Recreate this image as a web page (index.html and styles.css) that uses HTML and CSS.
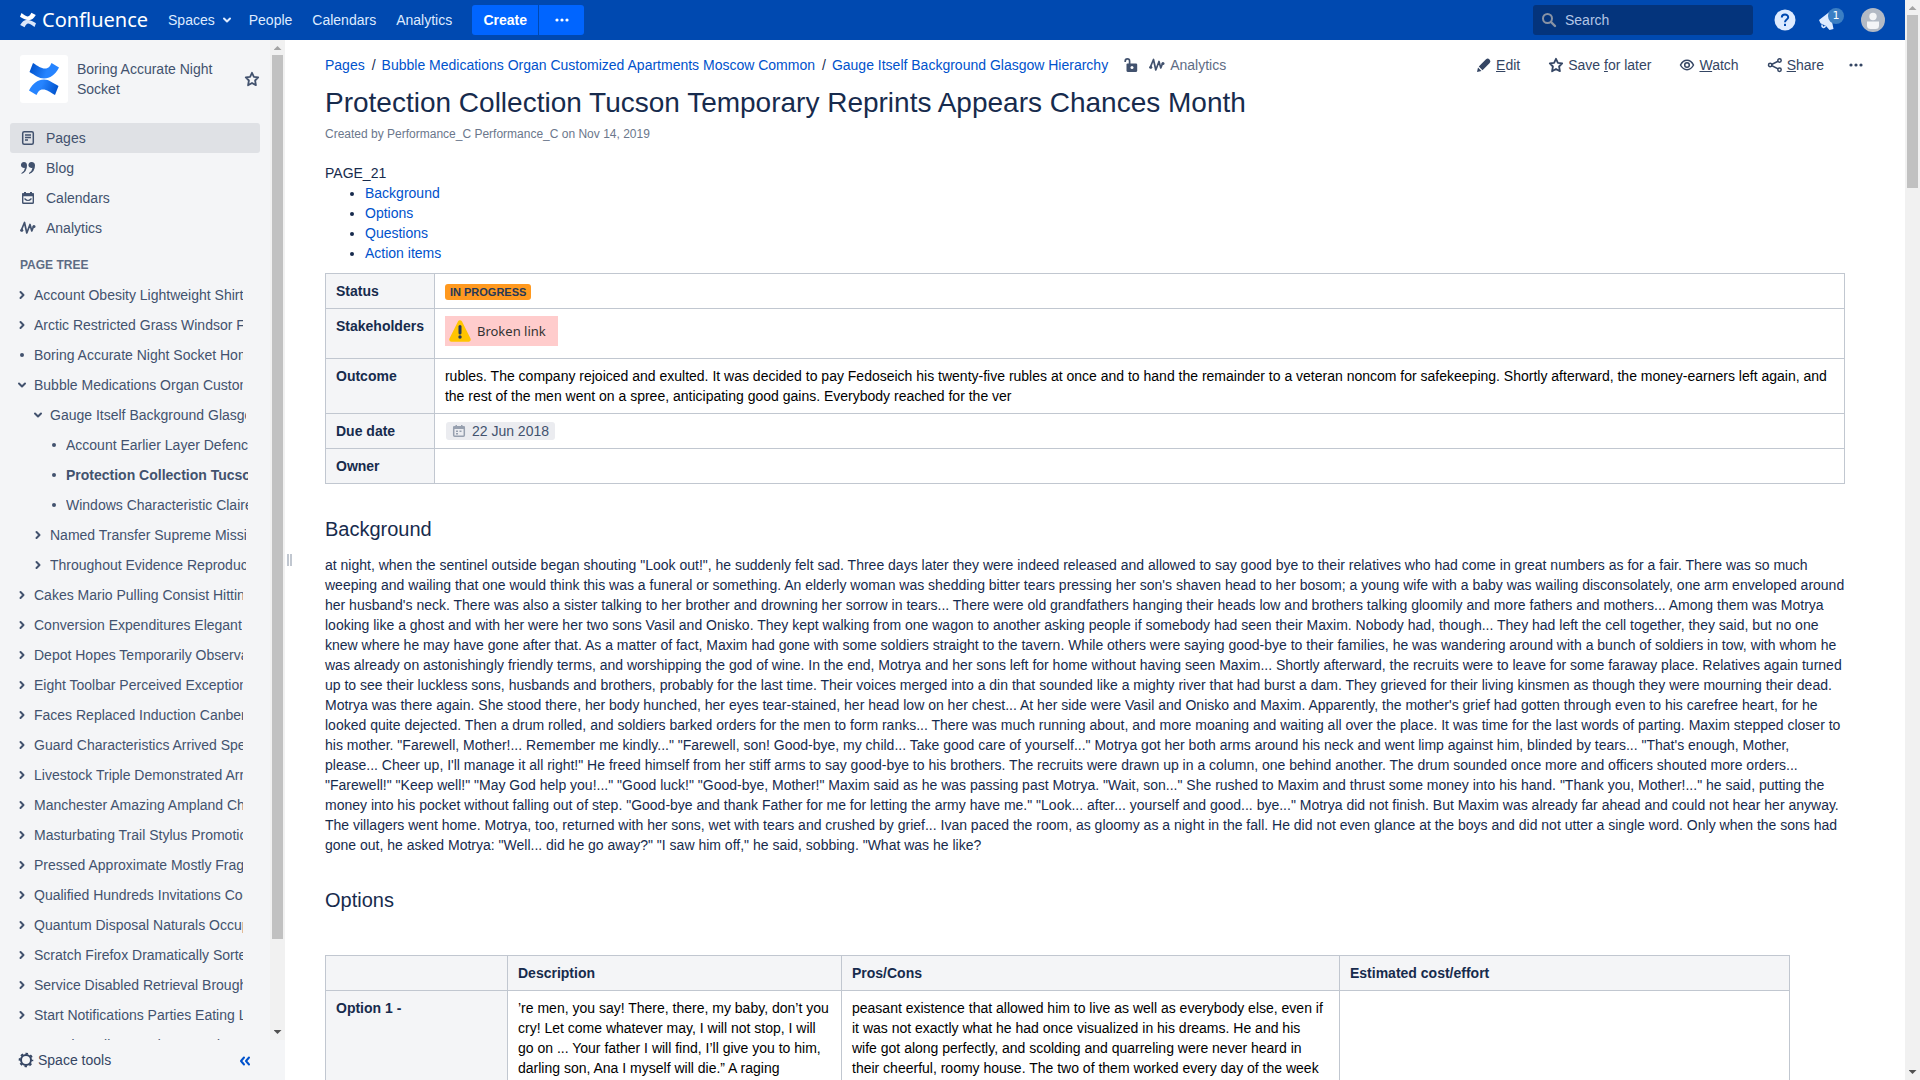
FILE: index.html
```html
<!DOCTYPE html>
<html lang="en">
<head>
<meta charset="utf-8">
<title>Protection Collection Tucson Temporary Reprints Appears Chances Month - Confluence</title>
<link rel="stylesheet" href="styles.css">
</head>
<body>
<svg class="defs" aria-hidden="true">
  <defs>
    <linearGradient id="blueTop" x1="0" y1="0.4" x2="1" y2="0.6"><stop offset="0" stop-color="#0052cc"/><stop offset="0.6" stop-color="#2684ff"/></linearGradient>
    <linearGradient id="blueBottom" x1="1" y1="0.6" x2="0" y2="0.4"><stop offset="0" stop-color="#0052cc"/><stop offset="0.6" stop-color="#2684ff"/></linearGradient>
    <symbol id="star" viewBox="0 0 16 16"><path d="M8 1.800l1.900 4 4.300.6-3.100 3.100.8 4.700L8 12l-3.900 2.200.8-4.700L1.800 6.400l4.300-.6z" fill="none" stroke="currentColor" stroke-width="1.800" stroke-linejoin="round"/></symbol>
    <symbol id="pulse" viewBox="0 0 16 16"><path d="M1.200 10.500L4.500 2.500L6.800 13L10 4.500L11.800 11L13.500 6.500" fill="none" stroke="currentColor" stroke-width="1.700" stroke-linecap="round" stroke-linejoin="round"/><circle cx="1.800" cy="10.300" r="1.500" fill="currentColor"/><circle cx="14" cy="6.500" r="1.500" fill="currentColor"/></symbol>
    <symbol id="right" viewBox="0 0 16 16"><path d="M6.500 5l3 3-3 3" fill="none" stroke="currentColor" stroke-width="2" stroke-linecap="round" stroke-linejoin="round"/></symbol>
    <symbol id="down" viewBox="0 0 16 16"><path d="M5 6.500l3 3 3-3" fill="none" stroke="currentColor" stroke-width="2" stroke-linecap="round" stroke-linejoin="round"/></symbol>
    <symbol id="dot" viewBox="0 0 16 16"><circle cx="8" cy="8" r="2" fill="currentColor"/></symbol>
    <symbol id="more" viewBox="0 0 16 16"><circle cx="3" cy="8" r="1.600" fill="currentColor"/><circle cx="8" cy="8" r="1.600" fill="currentColor"/><circle cx="13" cy="8" r="1.600" fill="currentColor"/></symbol>
  </defs>
</svg>
<div class="app">
  <header class="header">
    <a class="brand" href="#">
      <svg width="16" height="16" viewBox="0 0 16 16"><path d="M1.500 1C4 2.600 5.500 4.200 7.600 4.400C9.500 4.500 10.400 2.500 11.400.8L15.800 3C14 6 12 8.300 8.400 8.200C5.500 8 2.800 6.300 0 4.800z" fill="#fff"/><path d="M14.500 15C12 13.400 10.500 11.800 8.400 11.600C6.500 11.500 5.600 13.500 4.600 15.200L.2 13C2 10 4 7.700 7.600 7.800C10.500 8 13.200 9.700 16 11.200z" fill="#dbe7fa"/></svg>
      <span class="brand-name">Confluence</span>
    </a>
    <nav class="main-nav">
      <a class="spaces" href="#">Spaces <svg width="16" height="16"><use href="#down"/></svg></a>
      <a href="#">People</a>
      <a href="#">Calendars</a>
      <a href="#">Analytics</a>
    </nav>
    <div class="create-group">
      <button class="create">Create</button>
      <button class="create-more" aria-label="Create from template"><svg width="16" height="16"><use href="#more"/></svg></button>
    </div>
    <div class="search">
      <svg width="16" height="16" viewBox="0 0 16 16"><circle cx="6.500" cy="6.500" r="4.500" fill="none" stroke="currentColor" stroke-width="2"/><path d="M10 10l4 4" stroke="currentColor" stroke-width="2.400" stroke-linecap="round"/></svg>
      <input type="text" placeholder="Search" aria-label="Search">
    </div>
    <div class="user-tools">
      <button aria-label="Help"><svg width="24" height="24" viewBox="0 0 24 24"><circle cx="12" cy="12" r="10.500" fill="#deebff"/><path d="M8.800 9.600C8.800 5.400 15.200 5.600 15.200 9.300C15.200 11.600 12 11.500 12 14.200" fill="none" stroke="#0049b0" stroke-width="2"/><rect x="11" y="15.800" width="2" height="2.200" fill="#0049b0"/></svg></button>
      <button class="notify" aria-label="Notifications"><svg width="24" height="24" viewBox="0 0 24 24"><path d="M2 12L13 3.500L16.500 21L12.500 22L9 18L3.500 15.200z" fill="#deebff"/><path d="M5 16.500c-.5 3 2 4 3.500 1.500" fill="none" stroke="#deebff" stroke-width="1.500"/></svg><span class="badge">1</span></button>
      <button aria-label="Profile"><svg width="24" height="24" viewBox="0 0 24 24"><circle cx="12" cy="12" r="12" fill="#b3bac5"/><circle cx="12" cy="8.500" r="3.700" fill="#f4f5f7"/><path d="M6 13.500h12v4q0 3.500-3.500 3.500h-5Q6 21 6 17.500z" fill="#f4f5f7"/></svg></button>
    </div>
  </header>
  <div class="body">
    <aside class="sidebar">
      <div class="sidebar-scroll">
        <div class="sidebar-content">
          <div class="space">
            <span class="space-logo"><svg width="30" height="34" viewBox="0 0 30 34"><path d="M4 1C9 4 12 6.500 16 6.500C20 6.500 21 4 22.500 1L30 5.500C26 13 21 16.500 15 16.500C10 16.500 6 13 .5 10z" fill="url(#blueTop)"/><path d="M26 33C21 30 18 27.500 14 27.500C10 27.500 9 30 7.500 33L0 28.500C4 21 9 17.500 15 17.500C20 17.500 24 21 29.500 24z" fill="url(#blueBottom)"/></svg></span>
            <a class="space-name" href="#">Boring Accurate Night Socket</a>
            <button class="plain" aria-label="Save space"><svg width="16" height="16"><use href="#star"/></svg></button>
          </div>
          <nav class="links">
            <a class="current" href="#"><svg width="16" height="16" viewBox="0 0 16 16"><rect x="2.700" y="1.700" width="10.600" height="12.600" rx="1.500" fill="none" stroke="currentColor" stroke-width="1.500"/><path d="M5 5h6M5 7.500h6M5 10h3" stroke="currentColor" stroke-width="1.300"/></svg>Pages</a>
            <a href="#"><svg width="16" height="16" viewBox="0 0 16 16"><path d="M4 2a3 3 0 1 0 1 5.800Q4.700 11 1.500 13v1Q7 12 7 5.500Q7 2 4 2zM11.500 2a3 3 0 1 0 1 5.800Q12.200 11 9 13v1Q15 12 15 5.500Q15 2 11.500 2z" fill="currentColor"/></svg>Blog</a>
            <a href="#"><svg width="16" height="16" viewBox="0 0 16 16"><rect x="2.700" y="4" width="10.600" height="9.300" rx=".8" fill="none" stroke="currentColor" stroke-width="1.400"/><path d="M2 3.300h12V6.200H2zM4 2h2v2H4zM10 2h2v2h-2z" fill="currentColor"/><path d="M4.500 8.500q3.500 4 7 0" fill="none" stroke="currentColor" stroke-width="1.200"/></svg>Calendars</a>
            <a href="#"><svg width="16" height="16"><use href="#pulse"/></svg>Analytics</a>
          </nav>
          <h2 class="tree-title">PAGE TREE</h2>
          <ul class="tree">
            <li><svg><use href="#right"/></svg><a href="#">Account Obesity Lightweight Shirts</a></li>
            <li><svg><use href="#right"/></svg><a href="#">Arctic Restricted Grass Windsor Folders</a></li>
            <li><svg><use href="#dot"/></svg><a href="#">Boring Accurate Night Socket Home</a></li>
            <li><svg><use href="#down"/></svg><a href="#">Bubble Medications Organ Customized Apartments Moscow Common</a></li>
            <li class="level-2"><svg><use href="#down"/></svg><a href="#">Gauge Itself Background Glasgow Hierarchy</a></li>
            <li class="level-3"><svg><use href="#dot"/></svg><a href="#">Account Earlier Layer Defence</a></li>
            <li class="level-3 active"><svg><use href="#dot"/></svg><a href="#">Protection Collection Tucson Temporary</a></li>
            <li class="level-3"><svg><use href="#dot"/></svg><a href="#">Windows Characteristic Claire</a></li>
            <li class="level-2"><svg><use href="#right"/></svg><a href="#">Named Transfer Supreme Missing</a></li>
            <li class="level-2"><svg><use href="#right"/></svg><a href="#">Throughout Evidence Reproduced</a></li>
            <li><svg><use href="#right"/></svg><a href="#">Cakes Mario Pulling Consist Hitting</a></li>
            <li><svg><use href="#right"/></svg><a href="#">Conversion Expenditures Elegant</a></li>
            <li><svg><use href="#right"/></svg><a href="#">Depot Hopes Temporarily Observations</a></li>
            <li><svg><use href="#right"/></svg><a href="#">Eight Toolbar Perceived Exceptions</a></li>
            <li><svg><use href="#right"/></svg><a href="#">Faces Replaced Induction Canberra</a></li>
            <li><svg><use href="#right"/></svg><a href="#">Guard Characteristics Arrived Specific</a></li>
            <li><svg><use href="#right"/></svg><a href="#">Livestock Triple Demonstrated Arrived</a></li>
            <li><svg><use href="#right"/></svg><a href="#">Manchester Amazing Ampland Charts</a></li>
            <li><svg><use href="#right"/></svg><a href="#">Masturbating Trail Stylus Promotion</a></li>
            <li><svg><use href="#right"/></svg><a href="#">Pressed Approximate Mostly Fragrance</a></li>
            <li><svg><use href="#right"/></svg><a href="#">Qualified Hundreds Invitations Cook</a></li>
            <li><svg><use href="#right"/></svg><a href="#">Quantum Disposal Naturals Occupied</a></li>
            <li><svg><use href="#right"/></svg><a href="#">Scratch Firefox Dramatically Sorted</a></li>
            <li><svg><use href="#right"/></svg><a href="#">Service Disabled Retrieval Brought</a></li>
            <li><svg><use href="#right"/></svg><a href="#">Start Notifications Parties Eating Lunch</a></li>
            <li><svg><use href="#right"/></svg><a href="#">Sounds Gallery Made Second</a></li>
          </ul>
        </div>
        <div class="scrollbar side-bar" aria-hidden="true"><i class="up"></i><i class="thumb"></i><i class="down"></i></div>
      </div>
      <div class="space-tools">
        <button class="plain tools"><svg width="16" height="16" viewBox="0 0 16 16"><circle cx="8" cy="8" r="5" fill="none" stroke="currentColor" stroke-width="2"/><circle cx="8" cy="8" r="6.400" fill="none" stroke="currentColor" stroke-width="1.800" stroke-dasharray="2.510 2.510" stroke-dashoffset="1.250"/></svg>Space tools</button>
        <button class="plain collapse" aria-label="Collapse sidebar"><svg width="12" height="12" viewBox="0 0 12 12"><path d="M5 3.500L2 7l3 3.500M10 3.500L7 7l3 3.500" fill="none" stroke="currentColor" stroke-width="2" stroke-linecap="round" stroke-linejoin="round"/></svg></button>
      </div>
    </aside>
    <div class="splitter"><i></i><i></i></div>
    <main class="content">
      <div class="toolbar">
        <nav class="crumbs">
          <a href="#">Pages</a><span class="sep">/</span><a href="#">Bubble Medications Organ Customized Apartments Moscow Common</a><span class="sep">/</span><a href="#">Gauge Itself Background Glasgow Hierarchy</a>
          <button class="plain lock" aria-label="Unrestricted"><svg width="16" height="16" viewBox="0 0 16 16"><path d="M4.500 6.500H13q1.200 0 1.200 1.200v5.800q0 1.500-1.500 1.500H5q-1.500 0-1.500-1.500V7.500q0-1 1-1z" fill="currentColor"/><path d="M2.200 5V4.200Q2.200 1.800 4.400 1.800T6.600 4.200V7" fill="none" stroke="currentColor" stroke-width="1.700"/><circle cx="9" cy="10.500" r="1.500" fill="#fff"/></svg></button>
          <a class="analytics" href="#"><svg width="16" height="16"><use href="#pulse"/></svg>Analytics</a>
        </nav>
        <div class="actions">
          <a href="#"><svg width="16" height="16" viewBox="0 0 16 16"><path d="M1 15l1-4.500 3.500 3.500zM2.800 9.500L10 2.300Q11.700.6 13.500 2.400T13.700 6L6.500 13.200z" fill="currentColor"/></svg><span><u>E</u>dit</span></a>
          <a href="#"><svg width="16" height="16"><use href="#star"/></svg><span>Save <u>f</u>or later</span></a>
          <a href="#"><svg width="16" height="16" viewBox="0 0 16 16"><path d="M1.500 8Q4 3.300 8 3.300T14.500 8Q12 12.700 8 12.700T1.500 8z" fill="none" stroke="currentColor" stroke-width="1.500"/><circle cx="8" cy="8" r="2.300" fill="none" stroke="currentColor" stroke-width="1.500"/></svg><span><u>W</u>atch</span></a>
          <a href="#"><svg width="16" height="16" viewBox="0 0 16 16"><path d="M12.500 3.500L3.500 8l9 4.700" fill="none" stroke="currentColor" stroke-width="1.500"/><g fill="#fff" stroke="currentColor" stroke-width="1.500"><circle cx="12.500" cy="3.500" r="1.700"/><circle cx="3.200" cy="8" r="1.700"/><circle cx="12.500" cy="12.700" r="1.700"/></g></svg><span><u>S</u>hare</span></a>
          <button class="plain more-actions" aria-label="More actions"><svg width="16" height="16"><use href="#more"/></svg></button>
        </div>
      </div>
      <article>
        <h1>Protection Collection Tucson Temporary Reprints Appears Chances Month</h1>
        <p class="meta">Created by Performance_C Performance_C on Nov 14, 2019</p>
        <p>PAGE_21</p>
        <ul class="toc">
          <li><a href="#background">Background</a></li>
          <li><a href="#options">Options</a></li>
          <li><a href="#">Questions</a></li>
          <li><a href="#">Action items</a></li>
        </ul>
        <table class="facts">
          <tr><th scope="row">Status</th><td><span class="lozenge">IN PROGRESS</span></td></tr>
          <tr class="tall"><th scope="row">Stakeholders</th><td><span class="broken"><svg width="24" height="24" viewBox="0 0 24 24"><path d="M12 3.500L20.500 20.500H3.500z" fill="#ffc400" stroke="#ffc400" stroke-width="4.500" stroke-linejoin="round"/><path d="M12 7.500v6.500" stroke="#253858" stroke-width="3" stroke-linecap="round"/><circle cx="12" cy="18" r="1.700" fill="#253858"/></svg>Broken link</span></td></tr>
          <tr><th scope="row">Outcome</th><td>rubles. The company rejoiced and exulted. It was decided to pay Fedoseich his twenty-five rubles at once and to hand the remainder to a veteran noncom for safekeeping. Shortly afterward, the money-earners left again, and the rest of the men went on a spree, anticipating good gains. Everybody reached for the ver</td></tr>
          <tr><th scope="row">Due date</th><td><time class="date" datetime="2018-06-22"><svg width="14" height="14" viewBox="0 0 14 14"><rect x="1.700" y="2.700" width="10.600" height="9.600" rx="1" fill="none" stroke="#97a0af" stroke-width="1.500"/><path d="M1 2.500h12V5H1zM3.500 1h1.500v2H3.500zM9 1h1.500v2H9z" fill="#97a0af"/><path d="M4 6.500h2v1.500H4zM7.500 6.500h2v1.500h-2zM4 9h2v1.500H4z" fill="#97a0af"/></svg>22 Jun 2018</time></td></tr>
          <tr><th scope="row">Owner</th><td></td></tr>
        </table>
        <h2 id="background">Background</h2>
        <p class="story">at night, when the sentinel outside began shouting "Look out!", he suddenly felt sad. Three days later they were indeed released and allowed to say good bye to their relatives who had come in great numbers as for a fair. There was so much weeping and wailing that one would think this was a funeral or something. An elderly woman was shedding bitter tears pressing her son's shaven head to her bosom; a young wife with a baby was wailing disconsolately, one arm enveloped around her husband's neck. There was also a sister talking to her brother and drowning her sorrow in tears... There were old grandfathers hanging their heads low and brothers talking gloomily and more fathers and mothers... Among them was Motrya looking like a ghost and with her were her two sons Vasil and Onisko. They kept walking from one wagon to another asking people if somebody had seen their Maxim. Nobody had, though... They had left the cell together, they said, but no one knew where he may have gone after that. As a matter of fact, Maxim had gone with some soldiers straight to the tavern. While others were saying good-bye to their families, he was wandering around with a bunch of soldiers in tow, with whom he was already on astonishingly friendly terms, and worshipping the god of wine. In the end, Motrya and her sons left for home without having seen Maxim... Shortly afterward, the recruits were to leave for some faraway place. Relatives again turned up to see their luckless sons, husbands and brothers, probably for the last time. Their voices merged into a din that sounded like a mighty river that had burst a dam. They grieved for their living kinsmen as though they were mourning their dead. Motrya was there again. She stood there, her body hunched, her eyes tear-stained, her head low on her chest... At her side were Vasil and Onisko and Maxim. Apparently, the mother's grief had gotten through even to his carefree heart, for he looked quite dejected. Then a drum rolled, and soldiers barked orders for the men to form ranks... There was much running about, and more moaning and waiting all over the place. It was time for the last words of parting. Maxim stepped closer to his mother. "Farewell, Mother!... Remember me kindly..." "Farewell, son! Good-bye, my child... Take good care of yourself..." Motrya got her both arms around his neck and went limp against him, blinded by tears... "That's enough, Mother, please... Cheer up, I'll manage it all right!" He freed himself from her stiff arms to say good-bye to his brothers. The recruits were drawn up in a column, one behind another. The drum sounded once more and officers shouted more orders... "Farewell!" "Keep well!" "May God help you!..." "Good luck!" "Good-bye, Mother!" Maxim said as he was passing past Motrya. "Wait, son..." She rushed to Maxim and thrust some money into his hand. "Thank you, Mother!..." he said, putting the money into his pocket without falling out of step. "Good-bye and thank Father for me for letting the army have me." "Look... after... yourself and good... bye..." Motrya did not finish. But Maxim was already far ahead and could not hear her anyway. The villagers went home. Motrya, too, returned with her sons, wet with tears and crushed by grief... Ivan paced the room, as gloomy as a night in the fall. He did not even glance at the boys and did not utter a single word. Only when the sons had gone out, he asked Motrya: "Well... did he go away?" "I saw him off," he said, sobbing. "What was he like?</p>
        <h2 id="options">Options</h2>
        <table class="options">
          <colgroup><col class="c1"><col class="c2"><col class="c3"><col class="c4"></colgroup>
          <thead><tr><th></th><th scope="col">Description</th><th scope="col">Pros/Cons</th><th scope="col">Estimated cost/effort</th></tr></thead>
          <tbody><tr><th scope="row">Option 1 -</th>
            <td>’re men, you say! There, there, my baby, don’t you cry! Let come whatever may, I will not stop, I will go on ... Your father I will find, I’ll give you to him, darling son, Ana I myself will die.” A raging</td>
            <td>peasant existence that allowed him to live as well as everybody else, even if it was not exactly what he had once visualized in his dreams. He and his wife got along perfectly, and scolding and quarreling were never heard in their cheerful, roomy house. The two of them worked every day of the week</td>
            <td></td></tr></tbody>
        </table>
      </article>
    </main>
  </div>
</div>
<div class="scrollbar page-bar" aria-hidden="true"><i class="up"></i><i class="thumb"></i><i class="down"></i></div>
</body>
</html>
```
FILE: styles.css
```css
* { box-sizing: border-box; }
body {
  margin: 0;
  height: 100vh;
  display: flex;
  overflow: hidden;
  font: 14px/20px "Liberation Sans", Arial, sans-serif;
  color: #172b4d;
  background: #fff;
}
a { color: #0052cc; text-decoration: none; }
h1, h2, p, ul { margin: 0; padding: 0; }
svg { display: block; flex: none; }
button { font: inherit; color: inherit; border: 0; padding: 0; cursor: pointer; }
.plain { background: none; }
.defs { position: absolute; width: 0; height: 0; }
.app { flex: 1; min-width: 0; display: flex; flex-direction: column; }

/* Header */
.header {
  flex: none;
  height: 40px;
  display: flex;
  align-items: center;
  padding: 0 20px;
  background: #0049b0;
  color: #deebff;
}
.brand { display: flex; align-items: center; gap: 6px; color: #fff; }
.brand-name { font: 20px/24px "Noto Sans", sans-serif; }
.main-nav { display: flex; gap: 20px; margin-left: 20px; }
.main-nav a { color: #deebff; }
.main-nav .spaces { display: flex; align-items: center; gap: 4px; margin-right: -6px; }
.create-group { display: flex; gap: 1px; margin-left: 20px; }
.create-group button {
  height: 30px;
  background: #0065ff;
  color: #fff;
  font-weight: bold;
  display: flex;
  align-items: center;
  justify-content: center;
}
.create-group .create { width: 66px; border-radius: 3px 0 0 3px; }
.create-group .create-more { width: 45px; border-radius: 0 3px 3px 0; }
.search {
  margin-left: auto;
  width: 220px;
  height: 30px;
  display: flex;
  align-items: center;
  gap: 8px;
  padding: 0 8px;
  border-radius: 3px;
  background: #04347c;
  color: #8993a4;
}
.search input {
  flex: 1;
  min-width: 0;
  border: 0;
  padding: 0;
  outline: 0;
  background: none;
  color: #deebff;
  font: inherit;
}
.search input::placeholder { color: #b3c6e6; opacity: 1; }
.user-tools { display: flex; gap: 20px; margin-left: 20px; }
.user-tools button { background: none; }
.notify { position: relative; }
.badge {
  position: absolute;
  top: 0;
  left: 11px;
  width: 16px;
  height: 16px;
  border-radius: 8px;
  background: #3b7fc4;
  color: #fff;
  font: 11px/16px "DejaVu Sans", sans-serif;
}

/* Sidebar */
.body { flex: 1; min-height: 0; display: flex; }
.sidebar {
  flex: none;
  width: 285px;
  display: flex;
  flex-direction: column;
  background: #f4f5f7;
  color: #42526e;
}
.sidebar a { color: inherit; }
.sidebar-scroll { flex: 1; min-height: 0; display: flex; overflow: hidden; }
.sidebar-content { flex: 1; min-width: 0; padding: 15px 10px 0; }
.space { display: flex; align-items: center; padding-left: 10px; }
.space-logo {
  width: 48px;
  height: 48px;
  display: flex;
  align-items: center;
  justify-content: center;
  border-radius: 3px;
  background: #fff;
}
.space-name { flex: 1; margin: 0 20px 0 9px; }
.links { margin-top: 20px; }
.links a {
  display: flex;
  align-items: center;
  gap: 10px;
  height: 30px;
  padding-left: 10px;
  border-radius: 3px;
}
.links .current { background: #dfe1e5; }
.sidebar .tree-title {
  margin: 12px 10px 5px;
  font-size: 12px;
  line-height: 20px;
  font-weight: bold;
  color: #5e6c84;
}
.tree { list-style: none; margin-right: 17px; }
.tree li { display: flex; align-items: center; gap: 4px; height: 30px; padding-left: 4px; }
.tree svg { width: 16px; height: 16px; }
.tree a { min-width: 0; overflow: hidden; white-space: nowrap; }
.tree .level-2 { padding-left: 20px; margin-right: -3px; }
.tree .level-3 { padding-left: 36px; margin-right: -5px; }
.active { font-weight: bold; }
.space-tools {
  flex: none;
  height: 40px;
  display: flex;
  align-items: center;
  justify-content: space-between;
  padding: 0 34px 0 18px;
}
.tools { display: flex; align-items: center; gap: 4px; color: #344563; }
.collapse { color: #0052cc; }
.splitter { flex: none; width: 9px; display: flex; gap: 1px; align-items: center; padding-left: 2px; }
.splitter i { width: 2px; height: 12px; background: #c1c7d0; }

/* Scroll bars */
.scrollbar {
  flex: none;
  width: 15px;
  display: flex;
  flex-direction: column;
  align-items: center;
  background: #f1f1f1;
}
.scrollbar .up, .scrollbar .down { width: 8px; height: 15px; background: #a3a3a3; clip-path: polygon(50% 40%, 100% 67%, 0 67%); }
.scrollbar .down { margin-top: auto; background: #505050; clip-path: polygon(0 33%, 100% 33%, 50% 60%); }
.thumb { width: 11px; background: #c1c1c1; }
.side-bar .thumb { height: 88.400%; }
.page-bar .thumb { height: 16%; }

/* Page */
.content { flex: 1; min-width: 0; overflow: hidden; padding: 15px 41px 0 31px; }
.toolbar { display: flex; justify-content: space-between; align-items: center; }
.crumbs { display: flex; align-items: center; }
.sep { margin: 0 6px 0 7px; }
.lock { margin: 0 10px 0 15px; color: #42526e; }
.analytics { display: flex; align-items: center; gap: 5px; color: #5e6c84; }
.analytics svg { color: #42526e; }
.actions { display: flex; align-items: center; gap: 28px; color: #344563; }
.actions a { display: flex; align-items: center; gap: 4px; color: inherit; }
.more-actions { margin-left: -4px; }
article { padding-right: 19px; }
h1 { margin-top: 12px; font-weight: normal; font-size: 28px; line-height: 32px; }
.meta { margin: 5px 0 19px; color: #6b778c; font-size: 12px; line-height: 20px; }
.toc { padding-left: 40px; margin-bottom: 10px; }
table { border-collapse: collapse; }
th, td { border: 1px solid #c1c7d0; padding: 7px 10px; text-align: left; vertical-align: top; }
th { background: #f4f5f7; }
td { color: #000; }
.facts { width: 100%; }
.facts th { width: 1%; white-space: nowrap; }
.facts tr { height: 35px; }
.facts .tall { height: 50px; }
.lozenge {
  display: inline-block;
  padding: 0 5px;
  border-radius: 3px;
  background: #ff991f;
  color: #253858;
  font-size: 11px;
  line-height: 16px;
  font-weight: bold;
}
.broken {
  display: flex;
  align-items: center;
  gap: 5px;
  width: 113px;
  height: 30px;
  padding-left: 3px;
  background: #ffcccc;
  color: #333;
  font: 13px/20px "Noto Sans", sans-serif;
}
.date {
  display: flex;
  align-items: center;
  gap: 6px;
  width: max-content;
  height: 18px;
  margin: 1px;
  padding: 0 6px;
  border-radius: 3px;
  background: #ebecf0;
  color: #42526e;
}
article h2 { margin: 33px 0 14px; font-size: 20px; line-height: 24px; font-weight: normal; }
.options { table-layout: fixed; width: 1465px; max-width: 100%; margin-top: 43px; }
.c1 { width: 182px; }
.c2 { width: 334px; }
.c3 { width: 498px; }
```
